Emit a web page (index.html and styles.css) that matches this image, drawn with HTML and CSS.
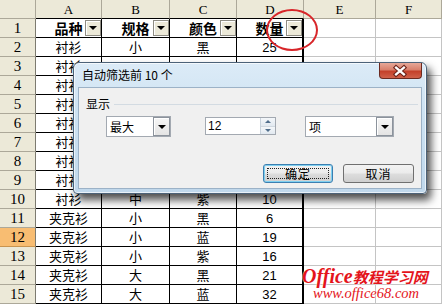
FILE: index.html
```html
<!DOCTYPE html>
<html>
<head>
<meta charset="utf-8">
<title>自动筛选前 10 个</title>
<link rel="stylesheet" href="styles.css">
</head>
<body>
<div class="screen">
  <div class="sheet">
    <div class="corner"></div>
    <div class="ch t">A</div><div class="ch t">B</div><div class="ch t">C</div><div class="ch t">D</div><div class="ch">E</div><div class="ch">F</div>

    <div class="rh">1</div>
    <div class="c h">品种<span class="fb"><i></i></span></div>
    <div class="c h">规格<span class="fb"><i></i></span></div>
    <div class="c h">颜色<span class="fb"><i></i></span></div>
    <div class="c d h">数量<span class="fb"><i></i></span></div>
    <div class="e"></div><div class="e"></div>

    <div class="rh">2</div><div class="c">衬衫</div><div class="c">小</div><div class="c">黑</div><div class="c d">25</div><div class="e"></div><div class="e"></div>
    <div class="rh">3</div><div class="c">衬衫</div><div class="c"></div><div class="c"></div><div class="c d"></div><div class="e"></div><div class="e"></div>
    <div class="rh">4</div><div class="c">衬衫</div><div class="c"></div><div class="c"></div><div class="c d"></div><div class="e"></div><div class="e"></div>
    <div class="rh">5</div><div class="c">衬衫</div><div class="c"></div><div class="c"></div><div class="c d"></div><div class="e"></div><div class="e"></div>
    <div class="rh">6</div><div class="c">衬衫</div><div class="c"></div><div class="c"></div><div class="c d"></div><div class="e"></div><div class="e"></div>
    <div class="rh">7</div><div class="c">衬衫</div><div class="c"></div><div class="c"></div><div class="c d"></div><div class="e"></div><div class="e"></div>
    <div class="rh">8</div><div class="c">衬衫</div><div class="c"></div><div class="c"></div><div class="c d"></div><div class="e"></div><div class="e"></div>
    <div class="rh">9</div><div class="c">衬衫</div><div class="c"></div><div class="c"></div><div class="c d"></div><div class="e"></div><div class="e"></div>
    <div class="rh">10</div><div class="c">衬衫</div><div class="c">中</div><div class="c">紫</div><div class="c d">10</div><div class="e"></div><div class="e"></div>
    <div class="rh">11</div><div class="c">夹克衫</div><div class="c">小</div><div class="c">黑</div><div class="c d">6</div><div class="e"></div><div class="e"></div>
    <div class="rh sel">12</div><div class="c">夹克衫</div><div class="c">小</div><div class="c">蓝</div><div class="c d">19</div><div class="e"></div><div class="e"></div>
    <div class="rh">13</div><div class="c">夹克衫</div><div class="c">小</div><div class="c">紫</div><div class="c d">16</div><div class="e"></div><div class="e"></div>
    <div class="rh">14</div><div class="c">夹克衫</div><div class="c">大</div><div class="c">黑</div><div class="c d">21</div><div class="e"></div><div class="e"></div>
    <div class="rh">15</div><div class="c">夹克衫</div><div class="c">大</div><div class="c">蓝</div><div class="c d">32</div><div class="e"></div><div class="e"></div>
  </div>

  <div class="ellipse"></div>

  <div class="dialog">
    <div class="titlebar">
      <span class="title">自动筛选前 10 个</span>
      <div class="close">
        <svg width="43" height="16" viewBox="0 0 43 16">
          <path d="M17.5 4.5 L25.5 11.5 M25.5 4.5 L17.5 11.5" stroke="#6b2219" stroke-width="4.6" stroke-linecap="square" fill="none"/>
          <path d="M17.5 4.5 L25.5 11.5 M25.5 4.5 L17.5 11.5" stroke="#ffffff" stroke-width="2.4" stroke-linecap="square" fill="none"/>
        </svg>
      </div>
    </div>
    <div class="client">
      <div class="group"><span class="glabel">显示</span><span class="gline"></span></div>
      <div class="controls">
        <div class="combo c1"><span class="val">最大</span><span class="drop"><i></i></span></div>
        <div class="spin"><span class="val">12</span><span class="spinbtns"><b class="up"></b><b class="down"></b></span></div>
        <div class="combo c2"><span class="val">项</span><span class="drop"><i></i></span></div>
      </div>
      <div class="buttons">
        <div class="btn def">确定</div>
        <div class="btn cancel">取消</div>
      </div>
    </div>
  </div>

  <div class="watermark">
    <div class="wm1"><span class="off">Office</span><span class="cn">教程学习网</span></div>
    <div class="wm2">www.office68.com</div>
  </div>
</div>
</body>
</html>
```
FILE: styles.css
```css
* { box-sizing: border-box; margin: 0; padding: 0; }
html, body { width: 442px; height: 306px; overflow: hidden; background: #fff; }
body { font-family: "Liberation Sans", "Noto Sans CJK SC", sans-serif; color: #000; }

.screen { position: relative; width: 442px; height: 306px; overflow: hidden; }

/* spreadsheet */
.sheet {
  display: grid;
  grid-template-columns: 36px 66px 68px 67px 67px 72px 66px;
  grid-auto-rows: 19px;
}
.sheet > div {
  display: flex;
  align-items: center;
  justify-content: center;
  font-size: 13px;
  line-height: 1;
  padding-top: 1px;
}
.corner {
  background: #ece9d8;
  border-right: 1px solid #aca899;
  border-bottom: 1px solid #aca899;
}
.ch {
  background: #ece9d8;
  border-right: 1px solid #aca899;
  border-bottom: 1px solid #aca899;
  font-family: "Liberation Serif", serif;
  font-size: 13px !important;
}
.ch.t { border-bottom-color: #000; }
.rh {
  background: #ece9d8;
  border-right: 1px solid #7d7b70;
  border-bottom: 1px solid #aca899;
  font-family: "Liberation Serif", serif;
  font-size: 15px !important;
}
.rh.sel { background: #f8bd72; border-bottom-color: #c89450; }
.c {
  border-right: 1px solid #000;
  border-bottom: 1px solid #000;
  background: #fff;
}
.c.d { border-right: 2px solid #000; }
.e {
  border-right: 1px solid #c4c4c4;
  border-bottom: 1px solid #c4c4c4;
}
.h { position: relative; font-weight: bold; font-size: 14px !important; }
.fb {
  position: absolute;
  right: 0;
  top: 1px;
  width: 16px;
  height: 16px;
  background: #ece9d8;
  border: 1px solid #8f8d84;
  box-shadow: inset 1px 1px 0 #fff;
  display: flex;
  align-items: center;
  justify-content: center;
}
.fb i {
  width: 0; height: 0;
  border-left: 4px solid transparent;
  border-right: 4px solid transparent;
  border-top: 4px solid #000;
}

/* red marker ellipse */
.ellipse {
  position: absolute;
  left: 266px;
  top: 9px;
  width: 52px;
  height: 42px;
  border: 2px solid #d8262a;
  border-radius: 50%;
}

/* dialog */
.dialog {
  position: absolute;
  left: 73px;
  top: 62px;
  width: 354px;
  height: 132px;
  border: 1px solid #4c6278;
  border-radius: 6px 6px 4px 4px;
  background: linear-gradient(180deg, #dcebf7 0%, #cde2f2 40%, #c0d8ec 100%);
  box-shadow: inset 0 0 0 1px rgba(255,255,255,0.65), 4px 6px 9px rgba(0,0,0,0.7);
  display: flex;
  flex-direction: column;
}
.titlebar {
  height: 24px;
  display: flex;
  justify-content: space-between;
  align-items: flex-start;
  padding: 0 4px 0 8px;
}
.title {
  font-family: "Noto Sans CJK SC", sans-serif;
  font-size: 12px;
  line-height: 24px;
  color: #000;
}
.close {
  width: 43px;
  height: 16px;
  border: 1px solid #6b2a20;
  border-top: none;
  border-radius: 0 0 4px 4px;
  background: linear-gradient(180deg, #e6a898 0%, #d8806c 45%, #c4402a 55%, #d0614a 100%);
  display: flex;
}
.close svg { display: block; margin-left: -1px; }
.client {
  flex: 1;
  margin: 0 4px 4px 4px;
  background: #f0f0f0;
  border: 1px solid #9cb2c7;
  display: flex;
  flex-direction: column;
  font-family: "Noto Sans CJK SC", sans-serif;
  font-size: 12px;
}
.group {
  margin-top: 9px;
  height: 14px;
  display: flex;
  align-items: center;
  padding: 0 3px 0 7px;
}
.glabel { line-height: 14px; }
.gline { flex: 1; height: 1px; background: #d3dbe2; margin-left: 4px; }
.controls {
  margin-top: 5px;
  display: flex;
  align-items: flex-start;
  padding-left: 27px;
}
.combo {
  height: 21px;
  border: 1px solid #a3a9b1;
  background: #fff;
  display: flex;
}
.c1 { width: 65px; margin-right: 34px; }
.c2 { width: 89px; }
.val { flex: 1; padding-left: 3px; line-height: 19px; }
.drop {
  width: 17px;
  border: 1px solid #8c939c;
  background: linear-gradient(180deg, #f6f6f6 0%, #e4e4e4 100%);
  box-shadow: inset 1px 1px 0 #fff;
  display: flex;
  align-items: center;
  justify-content: center;
}
.drop i {
  width: 0; height: 0;
  border-left: 4px solid transparent;
  border-right: 4px solid transparent;
  border-top: 4px solid #000;
}
.spin {
  width: 71px;
  height: 18px;
  margin-top: 1px;
  margin-right: 29px;
  border: 1px solid #a3a9b1;
  background: #fff;
  display: flex;
}
.spin .val { line-height: 16px; padding-left: 2px; font-family: "Liberation Sans", sans-serif; }
.spinbtns {
  width: 15px;
  display: flex;
  flex-direction: column;
  border-left: 1px solid #c8d2dc;
}
.spinbtns b {
  flex: 1;
  display: flex;
  align-items: center;
  justify-content: center;
  background: linear-gradient(180deg, #f4f7fa, #e2e9f0);
}
.spinbtns b::after {
  content: "";
  width: 0; height: 0;
  border-left: 3px solid transparent;
  border-right: 3px solid transparent;
}
.spinbtns .up::after { border-bottom: 3px solid #506e8c; }
.spinbtns .down { border-top: 1px solid #d0d8e0; }
.spinbtns .down::after { border-top: 3px solid #506e8c; }
.buttons {
  margin-top: 27px;
  display: flex;
  justify-content: flex-end;
  gap: 10px;
  padding-right: 7px;
}
.btn {
  position: relative;
  width: 71px;
  height: 19px;
  border: 1px solid #707070;
  border-radius: 3px;
  background: linear-gradient(180deg, #f3f3f3 0%, #ebebeb 48%, #dddddd 52%, #cfcfcf 100%);
  display: flex;
  align-items: center;
  justify-content: center;
  letter-spacing: 1px;
  line-height: 1;
}
.btn.def {
  width: 70px;
  border-color: #3c7fb1;
  box-shadow: inset 0 0 0 1px #7fd0f0;
}
.btn.def::after {
  content: "";
  position: absolute;
  left: 3px; right: 3px; top: 3px; bottom: 3px;
  border: 1px dotted #222;
}

/* watermark */
.watermark {
  position: absolute;
  left: 302px;
  top: 267px;
  color: #e4141b;
  text-shadow: 0 0 1px #fff, 0 0 2px #fff;
}
.wm1 { display: flex; align-items: baseline; height: 19px; white-space: nowrap; }
.off { font-family: "Liberation Serif", serif; font-style: italic; font-weight: bold; font-size: 20px; line-height: 19px; }
.cn { font-family: "Noto Sans CJK SC", sans-serif; font-style: italic; font-weight: bold; font-size: 15px; line-height: 19px; }
.wm2 {
  padding-left: 11px;
  font-family: "Liberation Serif", serif;
  font-style: italic;
  font-size: 14.5px;
  line-height: 15px;
  white-space: nowrap;
}
```
